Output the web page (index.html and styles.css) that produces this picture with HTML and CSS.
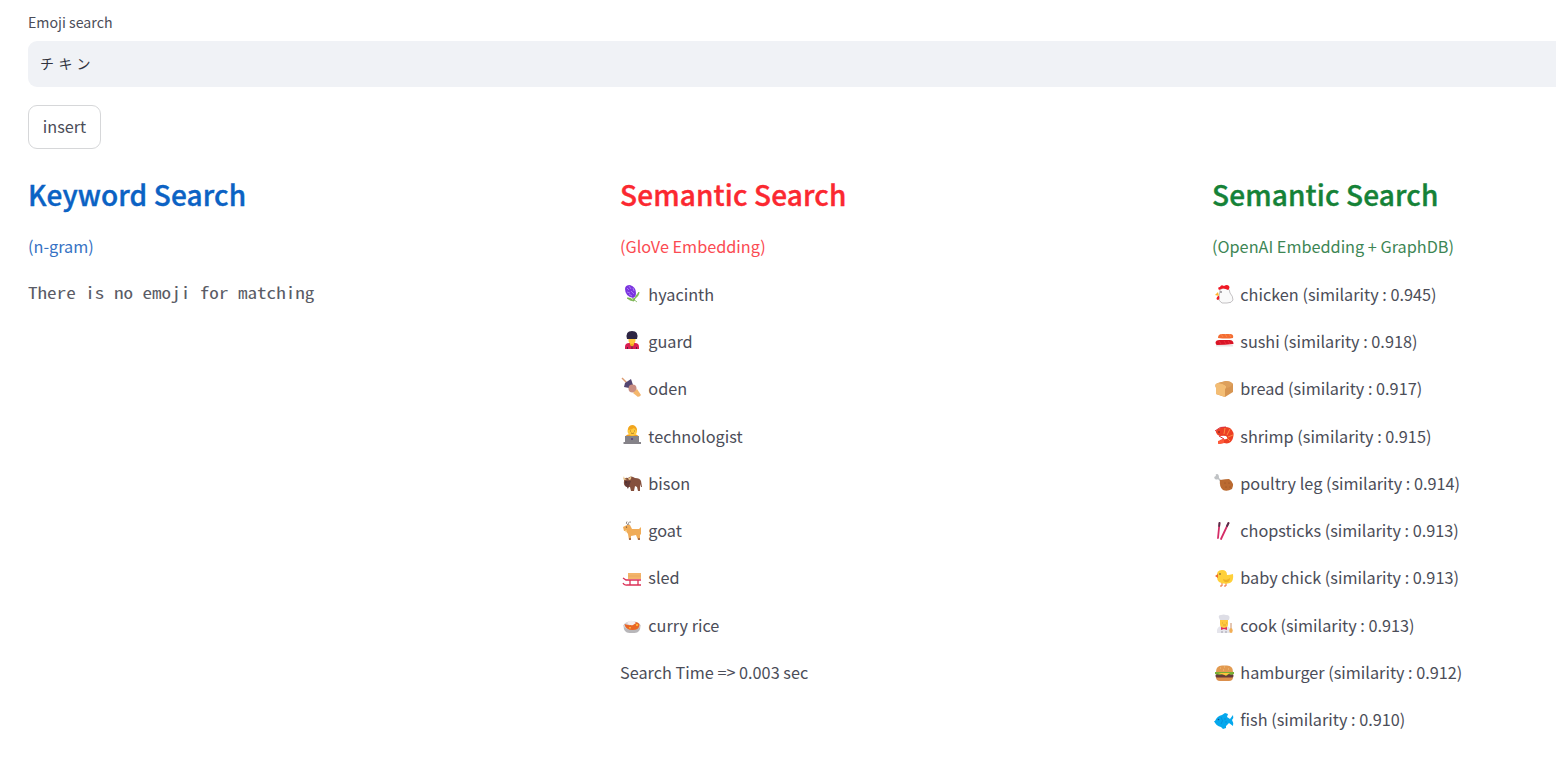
FILE: index.html
```
<!DOCTYPE html>
<html lang="en">
<head>
<meta charset="utf-8">
<title>Emoji search</title>
<link rel="stylesheet" href="styles.css">
</head>
<body>
<main class="app">
  <label class="label" for="query">Emoji search</label>
  <div class="field" id="query" lang="ja">チキン</div>
  <button class="button">insert</button>
  <div class="columns">
    <section class="column blue">
      <h2>Keyword Search</h2>
      <p class="method">(n-gram)</p>
      <p class="mono">There is no emoji for matching</p>
    </section>
    <section class="column red">
      <h2>Semantic Search</h2>
      <p class="method">(GloVe Embedding)</p>
      <div class="row"><svg class="icon" viewBox="0 0 20 20"><path d="M10 14L15 18M11 15Q17 13 17 8Q13 12 12 17Q8 17 5 14Q8 13 12 17" fill="#83bf4f" stroke="#6fae45" stroke-width=".7"/><path d="M3 5Q3 1 8 1Q14 3 14 9Q14 13 11 14Q3 12 3 5" fill="#7b35df"/><path d="M5 4l2 2m0-4l2 3m2-1l1 3M5 8l3 1m1-2l3 3m-5 0l3 2" stroke="#a779f2" stroke-width="1"/></svg><span>hyacinth</span></div>
      <div class="row"><svg class="icon" viewBox="0 0 20 20"><path d="M3 18v-2q0-4 4-4h6q4 0 4 4v2z" fill="#d91f52"/><path d="M8 12h4v2l-2 2-2-2z" fill="#efac20"/><path d="M6.500 7h7v2q0 4-3.500 4t-3.500-4z" fill="#ffc83d"/><path d="M5 8Q3 0 10 0T15 8z" fill="#2d2543"/><path d="M10 15v3M5.500 16v2M14.500 16v2" stroke="#5c213f"/></svg><span>guard</span></div>
      <div class="row"><svg class="icon" viewBox="0 0 20 20"><path d="M0-1L18 17" stroke="#dc9b70" stroke-width="1.500"/><path d="M2 8L3 4 9 0 11 6 7 9z" fill="#534570"/><circle cx="10.500" cy="9.500" r="4" fill="#c98e82"/><path d="M11 14l4-4 4 6-3 2z" fill="#f4b66c"/></svg><span>oden</span></div>
      <div class="row"><svg class="icon" viewBox="0 0 20 20"><path d="M3 11q1-3 7-3t7 3v5H3z" fill="#f19c20"/><circle cx="10.300" cy="5" r="4.800" fill="#ffc83d"/><path d="M6 4q0-5 5-5 4 1 4 6l-3-3q-3 2-6 2" fill="#f1a51d"/><path d="M8 5h1m3 0h1m-4 2q1.500 1 3 0" stroke="#8c6220" stroke-width=".7" fill="none"/><path d="M3 10h14v6H3zM1.500 16h17.500v2H1.500z" fill="#858389"/><circle cx="10" cy="13" r="1.100" fill="#5b4080"/></svg><span>technologist</span></div>
      <div class="row"><svg class="icon" viewBox="0 0 20 20"><path d="M6 5Q9 2 13 5q5 0 6 3l1 6h-1l-1-3v7h-2l-1-4-2-1-1 5H9l-1-4H5Q1 13 2 8q0-4 4-3" fill="#85503d"/><path d="M3 7q-3 0-1-4 0 3 3 3M7 7q3 0 2-4-1 2-3 2" fill="#e8c58d"/><path d="M3 8q-1 5 2 6 1 4 2-1l2-5" fill="#633b38"/><circle cx="4" cy="9" r=".6" fill="#201c29"/></svg><span>bison</span></div>
      <div class="row"><svg class="icon" viewBox="0 0 20 20"><path d="M7 4Q5 1 9 1M6 4Q3 2 5 .5" stroke="#938982" fill="none"/><path d="M1 6l4-2h3l2 4h7l2-2v7l-1 1v5h-2l-2-5-5 1v4H7l-1-6-2-3H2z" fill="#f0ac58"/><path d="M7 17h2v2H7zm9 0h2v2h-2z" fill="#a96f48"/><path d="M3 9l1 3 1-3z" fill="#f7cb7c"/><circle cx="4.500" cy="6" r=".6" fill="#40313c"/></svg><span>goat</span></div>
      <div class="row"><svg class="icon" viewBox="0 0 20 20"><path d="M6 5h13v6H6z" fill="#f4b56b"/><path d="M6 8h13" stroke="#df9d59" stroke-width=".5"/><path d="M1 10l3 2h15M1 15q1 2.500 4 2h14M8 12v5m8-5v5" fill="none" stroke="#db3157" stroke-width="1.300"/></svg><span>sled</span></div>
      <div class="row"><svg class="icon" viewBox="0 0 20 20"><path d="M1.500 10h17q0 8-6 8h-5q-6 0-6-8" fill="#b8b7ba"/><ellipse cx="10" cy="10.500" rx="8.500" ry="4.300" fill="#d5d0d3"/><path d="M2.500 9q7 3 11-2 4 1 4 3 0 5-7 5-7 0-8-6z" fill="#e96525"/><path d="M5 8q4-5 9 0l-3 2q-3 1-6-2" fill="#f5edef"/><path d="M14 9h2v2h-2zM7 12h2v1.500H7z" fill="#ffae2f"/></svg><span>curry rice</span></div>
      <div class="row">Search Time =&gt; 0.003 sec</div>
    </section>
    <section class="column green">
      <h2>Semantic Search</h2>
      <p class="method">(OpenAI Embedding + GraphDB)</p>
      <div class="row"><svg class="icon" viewBox="0 0 20 20"><path d="M6 6q2-3 7-2 3 1 3 5 3 3 3 7-1 3-6 3H8q-4-2-3-6z" fill="#fafafa" stroke="#aaa7ab" stroke-width=".7"/><path d="M5 6Q3 3 6 3q1-3 4-1 3-2 5 0 1 1 0 3l-1 1q-5-3-9 0M4 12q-3 3 0 4 2-1 1-4z" fill="#f01925"/><path d="M4 8l-3 3 4 1z" fill="#ffb52f"/><circle cx="7" cy="8" r=".8" fill="#49434b"/></svg><span>chicken (similarity : 0.945)</span></div>
      <div class="row"><svg class="icon" viewBox="0 0 20 20"><path d="M2 14h17v1.500H2z" fill="#e8e4e5"/><path d="M1.500 12q0-3 4-3h10q4 0 4 4-8 1-17 1z" fill="#d91425"/><path d="M4 7q0-4 4-4h8q4 0 3 4-6 1-15 0z" fill="#f36c32"/><path d="M7 3l2 3m2-3l2 3m2-3l2 3" stroke="#ff9256" stroke-width=".7"/><path d="M5 10l2 3m3-3l2 3m2-3l2 3" stroke="#ef3543" stroke-width=".7"/></svg><span>sushi (similarity : 0.918)</span></div>
      <div class="row"><svg class="icon" viewBox="0 0 20 20"><path d="M2 9Q0 5 4 4l8-2q4 0 7 3v8l-8 5-9-3z" fill="#d79551"/><path d="M2 8q-2-3 2-4 5 0 8 3 1 2-1 3v8l-9-3z" fill="#f3bd74"/><path d="M4 4l8-2q5 0 7 3-2 3-6 4-1-4-9-5" fill="#dda05c"/></svg><span>bread (similarity : 0.917)</span></div>
      <div class="row"><svg class="icon" viewBox="0 0 20 20"><path d="M2 5Q9-1 16 2q5 4 3 10-2 7-9 5l-5 1 1-4 3-1q5 1 4-2-1-2-7-1-4-1-4-5" fill="#ed3f24"/><path d="M2 5q6-5 9-3l-1 7q-7 1-8-4" fill="#ed3f24"/><path d="M11 2l-1 6m6-5l-3 6m6 0l-5 2m2 4l-3-3" stroke="#ff8b3d" stroke-width="1"/><path d="M1 5Q6 0 12 1M5 10l5 3" fill="none" stroke="#d92935"/><path d="M4 15l6-2v4l-6 1z" fill="#ff5938"/><circle cx="5" cy="6" r=".8" fill="#542233"/></svg><span>shrimp (similarity : 0.915)</span></div>
      <div class="row"><svg class="icon" viewBox="0 0 20 20"><path d="M8 8L5 5Q5 1 3 1 1 1 2 3q-3 1-1 3 2 1 3 0l3 4" fill="#bfc2c4"/><path d="M6 7q6-1 9-1 6 4 3 10-5 3-9 1-4-3-3-10" fill="#ba6a30"/><g fill="#8b4724"><circle cx="11" cy="10" r=".5"/><circle cx="15" cy="10" r=".5"/><circle cx="12" cy="14" r=".5"/><circle cx="16" cy="14" r=".5"/></g></svg><span>poultry leg (similarity : 0.914)</span></div>
      <div class="row"><svg class="icon" viewBox="0 0 20 20"><path d="M5.500 2l-1.500 15M14.500 2L7 18" stroke="#d52d67" stroke-width="1.800" stroke-linecap="round"/><path d="M5.500 2l-.3 3M14.500 2l-1.500 3" stroke="#51324b" stroke-width="1.800" stroke-linecap="round"/></svg><span>chopsticks (similarity : 0.913)</span></div>
      <div class="row"><svg class="icon" viewBox="0 0 20 20"><path d="M8 14v4H6m6-4v4h-2" fill="none" stroke="#ee6c32"/><path d="M3 9Q2 2 8 2q5 0 5 5 3 0 6-1 1 7-3 9-6 2-11-1-2-2-2-5" fill="#ffd039"/><path d="M9 11q4 2 7-1 0 5-5 4-2-1-2-3" fill="#efb226"/><path d="M4 6L1 8l3 2z" fill="#ee6c32"/><circle cx="6" cy="6" r=".8" fill="#55412a"/></svg><span>baby chick (similarity : 0.913)</span></div>
      <div class="row"><svg class="icon" viewBox="0 0 20 20"><path d="M3 18v-3q1-4 5-4h3q5 0 5 4v3z" fill="#e5e5ec"/><path d="M6 5h8v4q0 4-4 4T6 9z" fill="#ffc83d"/><path d="M6 5Q3 0 7 0q3-1 5 0 5 0 3 5H6z" fill="#dedee6"/><path d="M7 12l3 1 3-1v3l-3-1-3 1z" fill="#df3159"/><path d="M8 8h1m3 0h1m-4 2h3" stroke="#b9862f" stroke-width=".5"/><path d="M17 8v8" stroke="#ba7140" stroke-width=".8"/><ellipse cx="17" cy="15.500" rx="1.700" ry="2.500" fill="#f2ae55"/><path d="M8 16v2m4-2v2" stroke="#858391" stroke-width=".7"/></svg><span>cook (similarity : 0.913)</span></div>
      <div class="row"><svg class="icon" viewBox="0 0 20 20"><path d="M2 14h17q0 4-4 4H6q-4 0-4-4" fill="#db8f4c"/><rect x="1.500" y="11" width="18" height="3.500" rx="1.500" fill="#663b39"/><path d="M1 9h19v2l-3 1-2-1-3 2-3-2-3 1-5-1z" fill="#78af35"/><path d="M4 10h12l-4 2.500z" fill="#ffc33c"/><path d="M2 9Q2 2.500 8 2.500h5q6 0 6 6.500z" fill="#e29a50"/><path d="M6 5h1m3-1h1m3 2h1m-6 1h1" stroke="#f9d59a" stroke-width=".7"/></svg><span>hamburger (similarity : 0.912)</span></div>
      <div class="row"><svg class="icon" viewBox="0 0 20 20"><path d="M1 11Q3 6 8 5l3-2 3 1-1 3 3 2 3-4q1 3-1 5 2 3 1 6l-4-3-3 3v2l-3 1-2-2q-5-1-7-6" fill="#05a8ed"/><path d="M7 7q3 4 0 7M10 9h2m-1 3h2" fill="none" stroke="#0885d3" stroke-width=".7"/><circle cx="4.500" cy="9.500" r=".8" fill="#174c80"/></svg><span>fish (similarity : 0.910)</span></div>
    </section>
  </div>
</main>
</body>
</html>
```
FILE: styles.css
```
* { box-sizing: border-box; }
body {
  margin: 0;
  overflow: hidden;
  background: #fff;
  color: #4b4d58;
  font-family: "Noto Sans CJK JP", sans-serif;
  font-size: 16.25px;
}
.app { padding: 12px 0 0 28px; display: flex; flex-direction: column; align-items: flex-start; }
.label { font-size: 14.2px; line-height: 20px; height: 29px; }
.field {
  width: 100%;
  height: 46px;
  padding-left: 12px;
  border-radius: 9px 0 0 9px;
  background: #f0f2f6;
  color: #31333f;
  font-size: 14px;
  line-height: 44px;
  letter-spacing: 4.5px;
}
.button {
  width: 73px;
  height: 44px;
  margin-top: 18px;
  padding: 0 0 2px;
  border: 1.5px solid #d6d7d9;
  border-radius: 9px;
  background: #fff;
  color: #4b4d58;
  font: inherit;
}
.columns { display: grid; grid-template-columns: 592px 592px 344px; margin-top: 22px; }
.column { white-space: nowrap; }
h2 {
  margin: 0;
  font-size: 28px;
  font-weight: 500;
  line-height: 46px;
  letter-spacing: 0.14px;
  -webkit-text-stroke: 0.4px currentColor;
}
p { margin: 0; }
.method { height: 53px; line-height: 58px; }
.blue h2 { color: #0b62c4; }
.blue .method { color: #3672c4; }
.red h2 { color: #fb2830; }
.red .method { color: #fb4b52; }
.green h2 { color: #158237; }
.green .method { color: #3d8655; }
/* widens the half-width Latin glyphs to a regular monospace advance */
.mono {
  width: max-content;
  color: #5a5c66;
  font-family: "Noto Sans Mono CJK JP", "Liberation Mono", monospace;
  font-size: 16px;
  line-height: 44px;
  transform: scaleX(1.193);
  transform-origin: left;
}
.row { height: 47.3px; display: flex; align-items: center; }
.icon { width: 20px; height: 20px; margin: 1px 6.3px 0 2px; overflow: visible; fill: none; }
```
